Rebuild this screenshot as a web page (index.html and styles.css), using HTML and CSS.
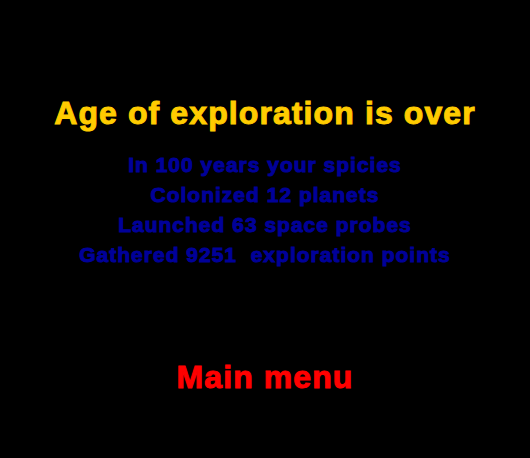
FILE: index.html
```html
<!DOCTYPE html>
<html>
<head>
<meta charset="utf-8">
<link rel="stylesheet" href="styles.css">
</head>
<body>
<div class="screen">
  <h1 class="title">Age of exploration is over</h1>
  <div class="stats">
    <div class="stat">In 100 years your spicies</div>
    <div class="stat">Colonized 12 planets</div>
    <div class="stat">Launched 63 space probes</div>
    <div class="stat">Gathered 9251  exploration points</div>
  </div>
  <div class="menu">Main menu</div>
</div>
</body>
</html>
```
FILE: styles.css
```css
html, body {
  margin: 0;
  padding: 0;
  background: #000;
}
.screen {
  width: 530px;
  height: 458px;
  display: flex;
  flex-direction: column;
  align-items: center;
  font-family: "Liberation Sans", Arial, sans-serif;
  font-weight: bold;
}
.title {
  margin: 95px 0 0 0;
  font-size: 32px;
  line-height: 36px;
  color: #ffcc00;
  font-weight: bold;
  letter-spacing: 1.1px;
  -webkit-text-stroke: 1px #ffcc00;
}
.stats {
  margin-top: 19px;
  display: flex;
  flex-direction: column;
  align-items: center;
}
.stat {
  font-size: 21px;
  line-height: 30px;
  color: #000099;
  white-space: pre;
  letter-spacing: 1px;
  -webkit-text-stroke: 1px #000099;
}
.menu {
  margin-top: 89px;
  font-size: 32px;
  line-height: 36px;
  color: #ff0000;
  letter-spacing: 1.1px;
  -webkit-text-stroke: 1px #ff0000;
}
```
